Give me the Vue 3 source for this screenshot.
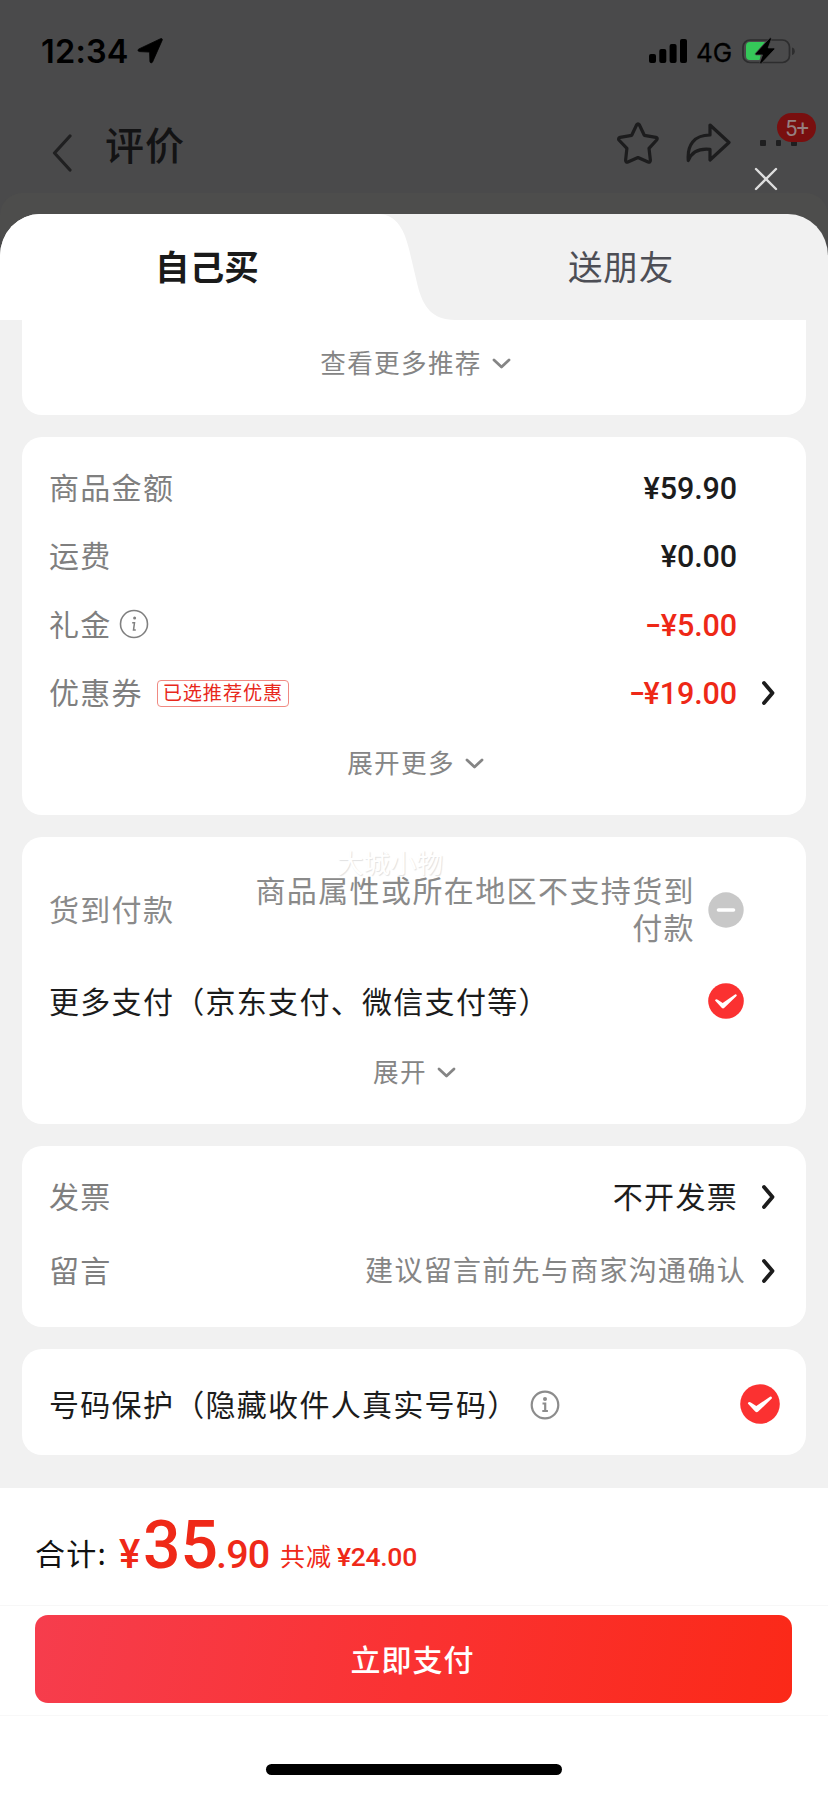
<script setup>
const amounts = [
  { label: '商品金额', minus: false, value: '¥59.90' },
  { label: '运费', minus: false, value: '¥0.00' },
  { label: '礼金', minus: true, value: '¥5.00', info: true },
  { label: '优惠券', minus: true, value: '¥19.00', tag: '已选推荐优惠', arrow: true }
]
</script>

<template>
  <div class="page">
    <header class="top">
      <div class="status">
        <span class="time">12:34</span>
        <svg class="loc" width="26" height="26" viewBox="0 0 26 26"><path d="M25.2 2.2 15.6 23.9c-.7 1.5-2.6 1.2-2.7-.5l-.3-9.3-10-.5C.8 13.500.4 11.500 2 10.900L23.600.7c1.200-.5 2.100.4 1.600 1.500Z" fill="#000" stroke="#000" stroke-width=".8" /></svg>
        <svg class="signal" width="39" height="24" viewBox="0 0 39 24">
          <rect x="0" y="15" width="7" height="9" rx="2" />
          <rect x="10.300" y="10" width="7" height="14" rx="2" />
          <rect x="20.600" y="5" width="7" height="19" rx="2" />
          <rect x="31" y="0" width="7" height="24" rx="2" />
        </svg>
        <span class="net">4G</span>
        <svg class="battery" width="54" height="28" viewBox="0 0 54 28">
          <rect x="1" y="3" width="46.500" height="22.500" rx="7" fill="none" stroke="#2d2d2e" stroke-width="1.700" />
          <path d="M50 10.500q2.800.8 2.800 3.700T50 18Z" fill="#2d2d2e" />
          <path d="M8 5h15l-9.500 12H19l-1.500 6H8q-4 0-4-4V9q0-4 4-4Z" fill="#35c759" />
          <path d="M27.500 1.200 13.500 16.300c-.6.8-.3 1.600.7 1.600h6.300l-2.700 7.300c-.4 1.400.8 2 1.800 1L32.400 12.600c.7-.8.4-1.700-.6-1.700h-5.600L29.300 2.400c.3-1.400-.8-2.200-1.800-1.200Z" stroke="#4a4a4b" stroke-width=".8" fill="#000" />
        </svg>
      </div>
      <div class="nav">
        <svg class="back" width="20" height="40" viewBox="0 0 20 40"><path d="M18 3 2.500 20 18 37" fill="none" stroke="#202021" stroke-width="3.200" stroke-linecap="round" stroke-linejoin="round" /></svg>
        <h1>评价</h1>
        <svg class="star" width="44" height="44" viewBox="0 0 44 44"><path d="M20.700 3.800Q22 2 23.300 3.800L28.300 14.300 39.900 16.300Q42.100 17 40.700 19L33 27.400 34.400 39.300Q34.300 41.600 32.100 41L22 36.500 11.900 41Q9.700 41.600 9.600 39.300L10.900 27.400 2.900 19Q1.900 17 4.100 16.300L15.700 14.300Z" fill="none" stroke="#1c1c1d" stroke-width="3.200" stroke-linejoin="round" /></svg>
        <svg class="share" width="46" height="42" viewBox="0 0 46 42"><path d="M24 3 43 20.500 24 38V27.300C13.500 26.300 6 29 2.300 38.500 1 23 8 13 24 13Z" fill="none" stroke="#1c1c1d" stroke-width="3.200" stroke-linejoin="round" /></svg>
        <div class="more">
          <i></i><i></i><i></i>
          <span class="badge">5+</span>
        </div>
      </div>
      <div class="behind"></div>
      <svg class="close" width="24" height="24" viewBox="0 0 24 24"><path d="M2 2 22 22M22 2 2 22" stroke="#dedede" stroke-width="2.400" stroke-linecap="round" /></svg>
    </header>

    <main class="sheet">
      <div class="tabs">
        <svg class="tabshape" width="828" height="106" viewBox="0 0 828 106"><path d="M0 0H378C397 0 405 17 409.500 37L418 73C423 92 432 106 455 106H0Z" fill="#fff" /></svg>
        <span class="tab active">自己买</span>
        <span class="tab">送朋友</span>
      </div>

      <section class="card c1">
        <div class="expand"><span>查看更多推荐</span><svg class="down" width="19" height="12" viewBox="0 0 19 12"><path d="m2 2 7.500 7L17 2" /></svg></div>
      </section>

      <section class="card c2">
        <div v-for="a in amounts" :key="a.label" class="row">
          <span class="label">{{ a.label }}</span>
          <svg v-if="a.info" class="info" width="30" height="30" viewBox="0 0 30 30"><circle cx="15" cy="15" r="13.500" fill="none" stroke="#808080" stroke-width="1.600" /><circle cx="15.600" cy="9" r="1.500" fill="#808080" /><path d="M13.200 13.700h2.300l-1 7.400h2.300" fill="none" stroke="#808080" stroke-width="1.500" /></svg>
          <span v-if="a.tag" class="tag">{{ a.tag }}</span>
          <span class="price" :class="{ red: a.minus }"><b v-if="a.minus">-</b>{{ a.value }}</span>
          <svg v-if="a.arrow" class="next" width="16" height="26" viewBox="0 0 16 26"><path d="m3 3 8.500 10L3 23" /></svg>
        </div>
        <div class="expand"><span>展开更多</span><svg class="down" width="19" height="12" viewBox="0 0 19 12"><path d="m2 2 7.500 7L17 2" /></svg></div>
      </section>

      <section class="card c3">
        <span class="mark">大城小物</span>
        <div class="row cod">
          <span class="label">货到付款</span>
          <p>商品属性或所在地区不支持货到付款</p>
          <svg class="state" width="36" height="36" viewBox="0 0 36 36"><circle cx="18" cy="18" r="17.700" fill="#c8c8c8" /><path d="M10.500 18h15" stroke="#fff" stroke-width="3.600" stroke-linecap="round" /></svg>
        </div>
        <div class="row pay">
          <span class="label dark">更多支付（京东支付、微信支付等）</span>
          <svg class="state" width="36" height="36" viewBox="0 0 40 40"><circle cx="20" cy="20" r="19.800" fill="#fb3131" /><path d="M7.800 19.500q.8-2.200 3-1l5.500 3.600L30 12.800q2-.8 2 1.500L18.200 27.600q-1.700 1.300-3-.2Z" fill="#fff" /></svg>
        </div>
        <div class="expand"><span>展开</span><svg class="down" width="19" height="12" viewBox="0 0 19 12"><path d="m2 2 7.500 7L17 2" /></svg></div>
      </section>

      <section class="card c4">
        <div class="row">
          <span class="label">发票</span>
          <span class="val">不开发票</span>
          <svg class="next" width="16" height="26" viewBox="0 0 16 26"><path d="m3 3 8.500 10L3 23" /></svg>
        </div>
        <div class="row">
          <span class="label">留言</span>
          <span class="hint">建议留言前先与商家沟通确认</span>
          <svg class="next" width="16" height="26" viewBox="0 0 16 26"><path d="m3 3 8.500 10L3 23" /></svg>
        </div>
      </section>

      <section class="card c5">
        <div class="row">
          <span class="label dark">号码保护（隐藏收件人真实号码）</span>
          <svg class="info2" width="30" height="30" viewBox="0 0 30 30"><circle cx="15" cy="15" r="13.300" fill="none" stroke="#8c8c8c" stroke-width="2.200" /><circle cx="15" cy="9" r="2" fill="#8c8c8c" /><path d="M12.500 13.500h2.700v7M12.300 21h5.600" fill="none" stroke="#8c8c8c" stroke-width="2.200" /></svg>
          <svg class="state big" width="40" height="40" viewBox="0 0 40 40"><circle cx="20" cy="20" r="19.800" fill="#fb3131" /><path d="M7.800 19.500q.8-2.200 3-1l5.500 3.600L30 12.800q2-.8 2 1.500L18.200 27.600q-1.700 1.300-3-.2Z" fill="#fff" /></svg>
        </div>
      </section>
    </main>

    <footer class="bottom">
      <div class="total">
        <span class="sum">合计:</span>
        <span class="yen">¥</span><span class="int">35</span><span class="dec">.90</span>
        <span class="off">共减</span><span class="offnum">¥24.00</span>
      </div>
      <div class="action"><button>立即支付</button></div>
      <div class="home"></div>
    </footer>
  </div>
</template>

<style>
body {
  margin: 0;
}
</style>

<style scoped>
.page {
  width: 828px;
  height: 1793px;
  overflow: hidden;
  display: flex;
  flex-direction: column;
  background: #4a4a4b;
  font-family: "Noto Sans CJK SC", "Noto Sans", sans-serif;
}
svg {
  display: block;
  flex: none;
}
.top {
  position: relative;
  height: 214px;
  flex: none;
}
.status {
  height: 102px;
  display: flex;
  align-items: center;
  box-sizing: border-box;
  padding-left: 41px;
  color: #000;
  font-family: Inter, sans-serif;
}
.time {
  font-size: 32.500px;
  font-weight: 600;
  letter-spacing: .2px;
  width: 96px;
  white-space: nowrap;
}
.signal {
  margin-left: 486px;
}
.net {
  font-size: 26px;
  margin-left: 8px;
  width: 44px;
  font-weight: 400;
  -webkit-text-stroke: .3px #000;
  margin-top: 2px;
  white-space: nowrap;
}
.battery {
  margin-left: 2px;
}
.nav {
  height: 91px;
  display: flex;
  align-items: flex-start;
  padding-left: 52px;
}
.back {
  margin-top: 31px;
}
h1 {
  margin: 13px 0 0 33px;
  font-size: 39px;
  line-height: 56px;
  font-weight: 500;
  letter-spacing: 1px;
  color: #131314;
  width: 90px;
  white-space: nowrap;
}
.star {
  margin: 19px 0 0 421px;
}
.share {
  margin: 20px 0 0 26px;
}
.more {
  position: relative;
  display: flex;
  gap: 10px;
  margin: 38px 0 0 28px;
}
.more i {
  width: 5.500px;
  height: 6px;
  background: #1f1f20;
  border-radius: 1px;
}
.badge {
  position: absolute;
  left: 17px;
  top: -27px;
  width: 39px;
  height: 29px;
  border-radius: 15px;
  background: #790f0f;
  color: #958080;
  font: 400 22px/31px Roboto, sans-serif;
  letter-spacing: -.8px;
  text-align: center;
}
.behind {
  height: 60px;
  border-radius: 22px;
  background: #4d4d4c;
}
.close {
  position: absolute;
  left: 754px;
  top: 167px;
}
.sheet {
  position: relative;
  flex: none;
  height: 1274px;
  background: #f1f1f1;
  border-radius: 40px 40px 0 0 / 42px 42px 0 0;
  overflow: hidden;
}
.tabs {
  position: relative;
  display: flex;
  height: 106px;
}
.tabshape {
  position: absolute;
  left: 0;
  top: 0;
}
.tab {
  position: relative;
  width: 414px;
  box-sizing: border-box;
  padding-left: 3px;
  text-align: center;
  font-size: 34.500px;
  line-height: 103px;
  letter-spacing: .8px;
  color: #4d4e55;
}
.tab + .tab {
  width: 411px;
}
.tab.active {
  font-weight: 700;
  color: #1a1a1a;
  letter-spacing: .2px;
  padding-left: 0;
}
.card {
  position: relative;
  width: 784px;
  margin: 0 22px 22px;
  box-sizing: border-box;
  background: #fff;
  border-radius: 20px;
  padding: 0 27px;
}
.c1 {
  height: 95px;
  border-radius: 0 0 20px 20px;
  padding-top: 15px;
}
.c2 {
  height: 378px;
  padding-top: 15px;
}
.c3 {
  height: 287px;
  padding-top: 26px;
}
.c4 {
  height: 181px;
  padding-top: 12px;
}
.c5 {
  height: 106px;
  padding-top: 1px;
}
.row {
  display: flex;
  align-items: center;
  height: 68.300px;
  padding-right: 41px;
}
.label {
  font-size: 30px;
  letter-spacing: 1.300px;
  color: #7f7f7f;
  white-space: nowrap;
}
.label.dark {
  color: #1c1c1c;
}
.info {
  margin: 3px 0 0 7px;
}
.tag {
  margin: 4px 0 0 14px;
  height: 25px;
  width: 130px;
  border: 1px solid #f08a82;
  border-radius: 4px;
  color: #e8281c;
  font-size: 19.200px;
  line-height: 22px;
  letter-spacing: .9px;
  text-align: center;
  white-space: nowrap;
}
.price {
  margin-left: auto;
  padding-top: 6px;
  font: 500 30.500px/36px Roboto, sans-serif;
  letter-spacing: -.1px;
  color: #1c1c1c;
  margin-right: 1px;
}
.price.red {
  color: #ee2817;
}
.price b {
  display: inline-block;
  font-weight: 500;
  transform: translate(-3px, -1px) scaleX(1.500);
}
.row:nth-child(4) .price b {
  transform: translate(-1px, -1px) scaleX(1.500);
}
.next {
  margin: 3px -39px 0 23px;
}
.next path {
  fill: none;
  stroke: #1c1c1c;
  stroke-width: 3.800;
  stroke-linecap: round;
  stroke-linejoin: round;
}
.expand {
  display: flex;
  align-items: center;
  justify-content: center;
  gap: 10px;
  height: 52px;
  padding-left: 3px;
  font-size: 25.600px;
  letter-spacing: 1.300px;
  color: #858585;
}
.down {
  margin-top: 5px;
}
.down path {
  fill: none;
  stroke: #858585;
  stroke-width: 2.800;
  stroke-linecap: round;
  stroke-linejoin: round;
}
.c2 .expand {
  margin-top: 10px;
}
.c3 .expand {
  margin-top: -2px;
  padding-left: 1px;
}
.mark {
  position: absolute;
  left: 315px;
  top: 8px;
  font-size: 26.500px;
  line-height: 34px;
  color: #fff;
  text-shadow: 1px 1px 1px #e2e2e2;
  white-space: nowrap;
}
.cod {
  height: 93px;
}
.cod .label {
  color: #8a8a8a;
  margin-top: -4px;
}
.cod p {
  margin: -4px 13px 0 auto;
  width: 445px;
  font-size: 30px;
  line-height: 37px;
  letter-spacing: 1.400px;
  text-align: right;
  color: #8a8a8a;
}
.state {
  margin-left: auto;
  margin-right: -6px;
}
.cod .state {
  margin-left: 0;
}
.pay {
  height: 90px;
}
.pay .label {
  margin-top: -3px;
}
.c4 .row {
  height: 74px;
}
.val {
  margin-left: auto;
  font-size: 30px;
  letter-spacing: 1.300px;
  color: #1c1c1c;
}
.hint {
  margin-left: auto;
  font-size: 28px;
  letter-spacing: 1.300px;
  color: #858585;
  margin-right: -8px;
}
.hint + .next {
  margin-left: 23px;
}
.c5 .row {
  height: 106px;
}
.info2 {
  margin: 3px 0 0 11px;
}
.state.big {
  margin-top: 2px;
  margin-right: -42px;
}
.bottom {
  flex: 1;
  background: #fff;
}
.total {
  height: 117px;
  display: flex;
  align-items: baseline;
  padding-left: 35px;
  line-height: 110px;
  white-space: nowrap;
  color: #ef2918;
  font-family: Roboto, sans-serif;
  font-weight: 500;
  border-bottom: 1px solid #f7f7f7;
}
.sum,
.off {
  font-family: "Noto Sans CJK SC", sans-serif;
  font-weight: 400;
}
.sum {
  color: #111;
  font-size: 30px;
  letter-spacing: 1.300px;
  width: 84px;
}
.yen {
  font-size: 40px;
  width: 24px;
  transform: translateY(3px);
}
.int {
  font-size: 66px;
  width: 73px;
  transform: translateY(3px);
}
.dec {
  font-size: 39.500px;
  letter-spacing: -.8px;
  width: 64px;
  transform: translateY(3px);
}
.off {
  font-size: 25px;
  letter-spacing: 1px;
  width: 57px;
  transform: translateY(1px);
}
.offnum {
  font-size: 26.500px;
  letter-spacing: -.3px;
  transform: translateY(1px);
}
.action {
  height: 110px;
  box-sizing: border-box;
  padding: 9px 35px 0;
  border-bottom: 1px solid #f8f8f8;
}
button {
  display: block;
  width: 757px;
  height: 88px;
  border: 0;
  border-radius: 13px;
  padding: 0 2px 2px 0;
  background: linear-gradient(100deg, #f63d4d 0%, #fa3232 50%, #fb2918 100%);
  color: #fff;
  font: 500 30px/84px "Noto Sans CJK SC", sans-serif;
  letter-spacing: 1px;
}
.home {
  width: 296px;
  height: 11px;
  border-radius: 6px;
  background: #000;
  margin: 48px auto 0;
}
</style>
